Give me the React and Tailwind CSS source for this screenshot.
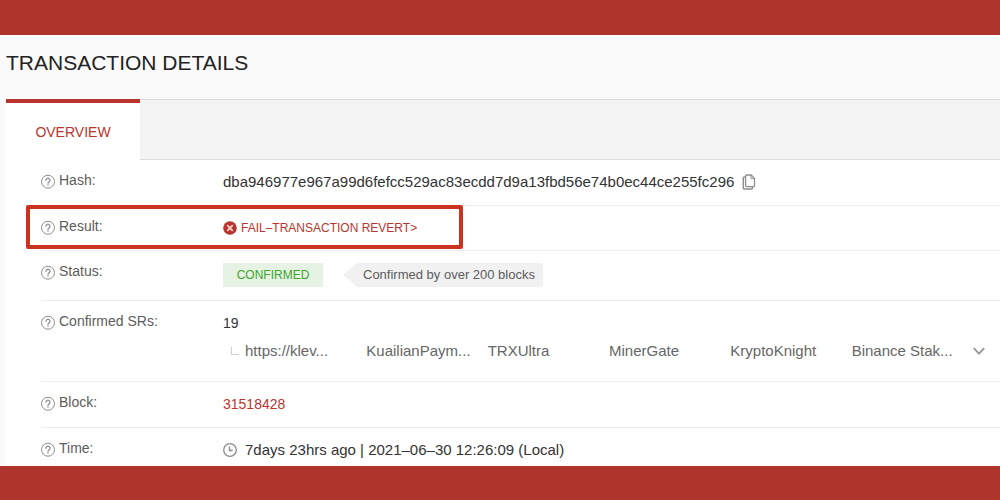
const representatives = [
  'https://klev...',
  'KuailianPaym...',
  'TRXUltra',
  'MinerGate',
  'KryptoKnight',
  'Binance Stak...',
]

function HelpIcon() {
  return (
    <svg width="14" height="16" viewBox="0 0 14 16" fill="none" stroke="#8c8c8c" className="mt-1 shrink-0">
      <circle cx="7" cy="7.7" r="6.5" strokeWidth="1" />
      <path d="M5 6.2a2 2 0 1 1 3.1 1.7C7.4 8.3 7 8.6 7 9.2" strokeWidth="1.3" strokeLinecap="round" />
      <circle cx="7" cy="11" r="0.8" fill="#8c8c8c" stroke="none" />
    </svg>
  )
}

function CopyIcon() {
  return (
    <svg width="14" height="16" viewBox="0 0 14 16" fill="none" stroke="#8f8f8f" strokeLinejoin="round" className="block">
      <path d="M4.6 1h4.6l3.3 3.4v7.2a1 1 0 0 1-1 1H4.6a1 1 0 0 1-1-1V2a1 1 0 0 1 1-1z" strokeWidth="1.3" />
      <path d="M9 1v3.6h3.5" strokeWidth="1" />
      <path d="M3.2 3H2.3a1 1 0 0 0-1 1v10a1 1 0 0 0 1 1h7.2a1 1 0 0 0 1-1v-1.2" strokeWidth="1.5" />
    </svg>
  )
}

function FailIcon() {
  return (
    <svg width="14" height="14" viewBox="0 0 14 14">
      <circle cx="7" cy="7" r="6.8" fill="#b8352d" />
      <path d="M4.7 4.7l4.6 4.6M9.3 4.7L4.7 9.3" stroke="#f3cfcb" strokeWidth="1.8" strokeLinecap="round" />
    </svg>
  )
}

function ClockIcon() {
  return (
    <svg width="14" height="14" viewBox="0 0 14 14" fill="none" stroke="#8c8c8c">
      <circle cx="7" cy="7" r="6.3" strokeWidth="1.3" />
      <path d="M6.5 3.6v3.9h3.2" strokeWidth="1.4" />
    </svg>
  )
}

function ChevronIcon() {
  return (
    <svg width="12" height="8" viewBox="0 0 12 8" fill="none" stroke="#949494" className="block">
      <path d="M0.8 1.2L6 6.6l5.2-5.4" strokeWidth="1.8" />
    </svg>
  )
}

function Row({ label, className = '', children }) {
  return (
    <div className={`relative flex border-b border-[#ececec] ${className}`}>
      <dt className="flex w-[182px] shrink-0 gap-1 leading-5 text-[#5c5c5c]">
        <HelpIcon />
        {label}:
      </dt>
      <dd className="min-w-0 flex-1 pt-0.5 leading-5 text-[#333]">{children}</dd>
    </div>
  )
}

export default function App() {
  return (
    <div className="flex h-screen flex-col bg-[#ae342c] pt-[35px] pb-[34px] font-['Liberation_Sans',Arial,sans-serif] text-sm">
      <main className="min-h-0 flex-1 overflow-hidden bg-[#fafafa] pl-1.5">
        <h1 className="h-16 pt-3 text-[21px] leading-8 text-[#222]">TRANSACTION DETAILS</h1>

        <div className="bg-white">
          <div role="tablist" className="flex">
            <button
              role="tab"
              aria-selected="true"
              className="h-[61px] w-[134px] border-t-4 border-[#b8352d] text-[#b8352d]"
            >
              OVERVIEW
            </button>
            <div className="flex-1 border-y border-[#dcdcdc] bg-[#f3f3f3]" />
          </div>

          <dl className="pl-[35px]">
            <Row label="Hash" className="h-[46px] pt-2.5">
              <div className="flex items-center gap-2 text-[15px]">
                <span>dba946977e967a99d6fefcc529ac83ecdd7d9a13fbd56e74b0ec44ce255fc296</span>
                <button aria-label="Copy hash">
                  <CopyIcon />
                </button>
              </div>
            </Row>

            <Row label="Result" className="h-[45px] pt-2.5">
              <div className="flex items-center gap-1 text-xs leading-5 text-[#b8352d]">
                <FailIcon />
                FAIL–TRANSACTION REVERT&gt;
              </div>
              <div className="pointer-events-none absolute -top-px -left-[15px] h-11 w-[437px] rounded-xs border-4 border-[#cb3220]" />
            </Row>

            <Row label="Status" className="h-[50px] pt-2.5">
              <div className="flex items-center gap-5">
                <span className="w-[100px] bg-[#e6f2e4] text-center text-xs leading-6 text-[#3fa52b]">CONFIRMED</span>
                <span className="flex text-[13px] text-[#5c5c5c]">
                  <svg width="14" height="24" viewBox="0 0 14 24" fill="#f1f1f1">
                    <path d="M14 0v24L0 12z" />
                  </svg>
                  <span className="rounded-r-xs bg-[#f1f1f1] pr-2 pl-1.5 leading-6">
                    Confirmed by over 200 blocks
                  </span>
                </span>
              </div>
            </Row>

            <Row label="Confirmed SRs" className="h-[81px] pt-2.5">
              <div>19</div>
              <div className="mt-2 flex items-center pr-[15px] pl-2 text-[15px] text-[#666]">
                <span className="mr-1.5 h-2 w-2 border-b border-l border-[#d0d0d0]" />
                <ul className="grid flex-1 grid-cols-6">
                  {representatives.map((name) => (
                    <li key={name}>{name}</li>
                  ))}
                </ul>
                <button aria-label="Show more">
                  <ChevronIcon />
                </button>
              </div>
            </Row>

            <Row label="Block" className="h-[46px] pt-2.5">
              <a href="#block" className="text-[#b8352d]">31518428</a>
            </Row>

            <Row label="Time" className="h-[46px] pt-2.5">
              <div className="flex items-center gap-2 text-[15px]">
                <ClockIcon />
                7days 23hrs ago | 2021–06–30 12:26:09 (Local)
              </div>
            </Row>
          </dl>
        </div>
      </main>
    </div>
  )
}
